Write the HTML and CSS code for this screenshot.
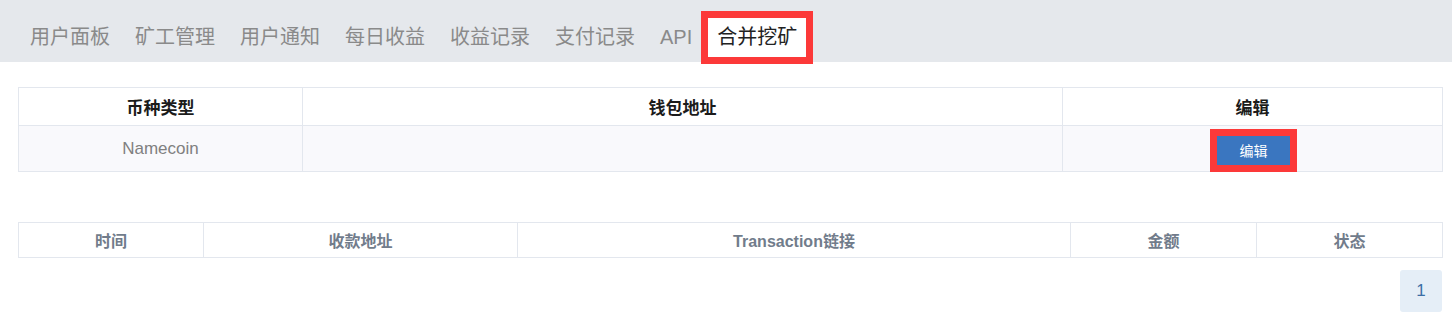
FILE: index.html
```html
<!DOCTYPE html>
<html>
    <head>
        <meta charset="utf-8">
        <title>合并挖矿</title>
        <link rel="stylesheet" href="styles.css">
    </head>
    <body>

        <div class="nav">
            <a class="tab">用户面板</a>
            <a class="tab">矿工管理</a>
            <a class="tab">用户通知</a>
            <a class="tab">每日收益</a>
            <a class="tab">收益记录</a>
            <a class="tab">支付记录</a>
            <a class="tab">API</a>
            <a class="tab active">合并挖矿</a>
        </div>

        <div class="content">

            <table class="coinTable">
                <colgroup>
                    <col class="colType">
                    <col class="colWallet">
                    <col class="colEdit">
                </colgroup>
                <tr>
                    <th>币种类型</th>
                    <th>钱包地址</th>
                    <th>编辑</th>
                </tr>
                <tr>
                    <td class="coinName">Namecoin</td>
                    <td></td>
                    <td><button class="editBtn">编辑</button></td>
                </tr>
            </table>

            <table class="payTable">
                <colgroup>
                    <col class="colTime">
                    <col class="colAddr">
                    <col class="colTx">
                    <col class="colAmount">
                    <col class="colState">
                </colgroup>
                <tr>
                    <th>时间</th>
                    <th>收款地址</th>
                    <th>Transaction链接</th>
                    <th>金额</th>
                    <th>状态</th>
                </tr>
            </table>

            <div class="pager">
                <span class="page">1</span>
            </div>

        </div>

    </body>
</html>
```

FILE: styles.css
```css
body{
    margin: 0;
    background: #fff;
    font-family: "Liberation Sans", "Noto Sans CJK SC", sans-serif;
}

.nav{
    display: flex;
    align-items: flex-start;
    gap: 7px;
    height: 62px;
    box-sizing: border-box;
    padding: 18px 0 0 21px;
    background-color: #e5e8ec;
}

.tab{
    height: 39px;
    line-height: 39px;
    padding: 0 9px;
    font-size: 20px;
    color: #8a8a8a;
    cursor: pointer;
}

.tab.active{
    background-color: #fff;
    color: #222;
    outline: 7px solid #fc3939;
}

.content{
    padding: 25px 10px 0 18px;
}

table{
    width: 100%;
    table-layout: fixed;
    border-collapse: collapse;
}

th, td{
    padding: 0;
    border: 1px solid #e3e7ee;
    text-align: center;
}

.coinTable th{
    height: 37px;
    font-size: 17px;
    font-weight: bold;
    color: #1b1b1b;
}

.coinTable td{
    height: 45px;
    background-color: #f9f9fc;
}

.colType{ width: 284px; }
.colWallet{ width: 760px; }
.colEdit{ width: 380px; }

.coinName{
    font-size: 17px;
    color: #808080;
}

.editBtn{
    width: 73px;
    height: 29px;
    margin: 3px 0 0 2px;
    border: none;
    padding: 0;
    background-color: #3a76c0;
    color: #fff;
    font-family: "Liberation Sans", "Noto Sans CJK SC", sans-serif;
    font-size: 14px;
    outline: 7px solid #fc3939;
    vertical-align: middle;
}

.payTable{
    margin-top: 50px;
}

.payTable th{
    height: 34px;
    font-size: 16px;
    font-weight: bold;
    color: #717c8b;
}

.colTime{ width: 185px; }
.colAddr{ width: 314px; }
.colTx{ width: 553px; }
.colAmount{ width: 186px; }
.colState{ width: 186px; }

.pager{
    display: flex;
    justify-content: flex-end;
    margin-top: 12px;
}

.page{
    width: 42px;
    height: 42px;
    line-height: 42px;
    text-align: center;
    border-radius: 3px;
    background-color: #e5eef7;
    color: #3d6ea6;
    font-size: 17px;
}
```
